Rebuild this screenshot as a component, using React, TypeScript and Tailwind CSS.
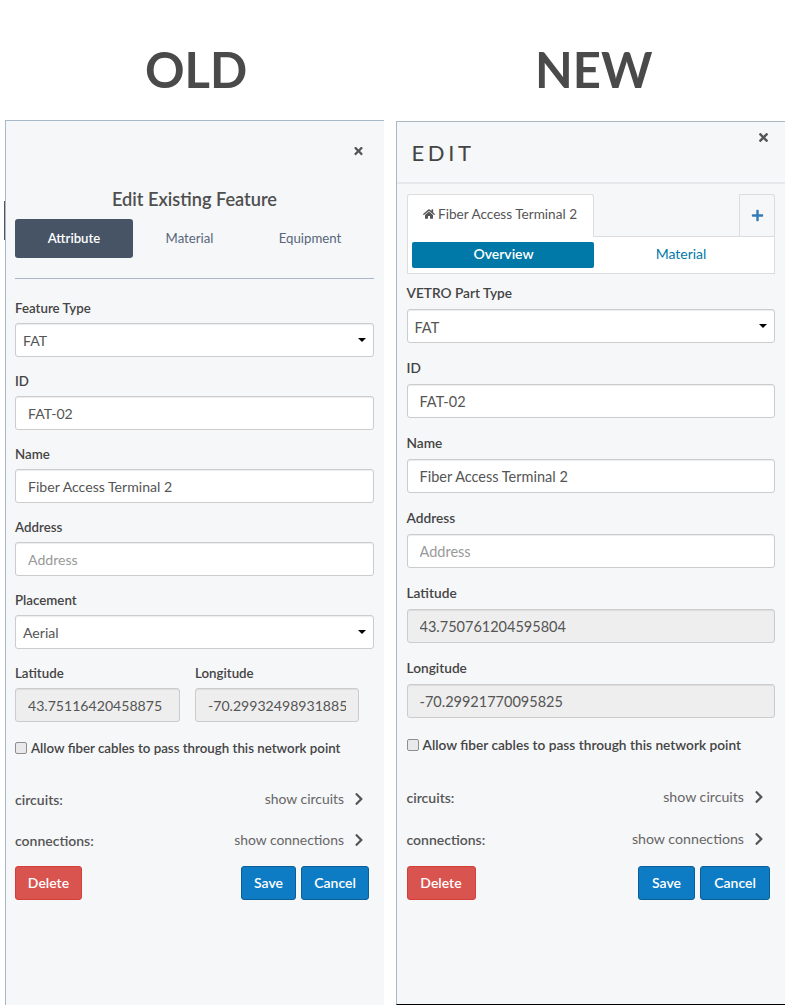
import { FaChevronRight, FaHome, FaPlus, FaTimes } from "react-icons/fa";

const inputBase =
  "block h-[34px] w-full rounded-[3px] border border-[#ccc] px-3 text-[#555] outline-none placeholder:text-[#999] shadow-[inset_0_1px_1px_rgba(0,0,0,0.075)]";

function Label({ children }: { children: React.ReactNode }) {
  return <div className="h-[20px] leading-[20px] font-semibold text-[#444]">{children}</div>;
}

function TextInput({ value, placeholder, disabled, large }: { value?: string; placeholder?: string; disabled?: boolean; large?: boolean }) {
  return (
    <input
      readOnly
      value={value ?? ""}
      placeholder={placeholder}
      className={`${inputBase} ${large ? "text-[14.5px]" : "text-[14.1px]"} ${disabled ? "bg-[#eee]" : "bg-white"}`}
    />
  );
}

function SelectBox({ value, large }: { value: string; large?: boolean }) {
  return (
    <div
      className={`flex h-[34px] w-full items-center justify-between rounded-[3px] border border-[#ccc] bg-white pr-[7px] pl-[7px] text-[#555] shadow-[inset_0_1px_1px_rgba(0,0,0,0.075)] ${large ? "text-[14.5px]" : "text-[14.1px]"}`}
    >
      <span className={large ? "pt-[3px]" : "pt-[2px]"}>{value}</span>
      <span className="h-0 w-0 border-x-[4px] border-t-[4px] border-x-transparent border-t-black" />
    </div>
  );
}

function Field({ label, className, children }: { label: string; className?: string; children: React.ReactNode }) {
  return (
    <div className={className}>
      <Label>{label}</Label>
      {children}
    </div>
  );
}

function CheckRow() {
  return (
    <div className="flex items-center gap-[4px] leading-[20px] font-semibold text-[#444]">
      <span className="h-[12px] w-[12px] rounded-[2px] border border-[#8f8f8f] bg-[#e9e9e9]" />
      <span className="whitespace-nowrap">Allow fiber cables to pass through this network point</span>
    </div>
  );
}

function ShowRow({ label, action, className, actionSize }: { label: string; action: string; className?: string; actionSize: string }) {
  return (
    <div className={`flex h-[20px] items-center justify-between text-[14px] text-[#555] ${className ?? ""}`}>
      <span className="font-semibold">{label}</span>
      <span className={`flex items-center gap-[9px] text-[#666] ${actionSize}`}>
        {action}
        <FaChevronRight className="h-[14px] w-[12px] text-[#555]" />
      </span>
    </div>
  );
}

function Buttons({ className, saveW, cancelW, deleteW }: { className?: string; saveW: string; cancelW: string; deleteW: string }) {
  const blue = "flex h-[34px] items-center justify-center rounded-[3px] border border-[#0b5e96] bg-[#0e7cc4] pb-[2px] text-[14px] font-semibold text-white";
  return (
    <div className={`flex items-start justify-between ${className ?? ""}`}>
      <div className={`flex h-[34px] items-center justify-center rounded-[3px] border border-[#d43f3a] bg-[#d9534f] pb-[2px] text-[14px] font-semibold text-white ${deleteW}`}>
        Delete
      </div>
      <div className="flex gap-[5px]">
        <div className={`${blue} ${saveW}`}>Save</div>
        <div className={`${blue} ${cancelW}`}>Cancel</div>
      </div>
    </div>
  );
}

function OldPanel() {
  return (
    <div className="relative h-[885px] w-[379px] border-t border-l border-[#a9b8c9] bg-[#f6f7f9] pr-[10px] pl-[9px] text-[13.3px]">
      <span className="absolute top-[80px] -left-[2px] h-[39px] w-px bg-[#555]" />
      <FaTimes className="absolute top-[24px] right-[20px] h-[12px] w-[11px] text-[#555]" />
      <div className="pt-[66px] text-center text-[18.2px] leading-[24px] font-semibold text-[#4f4f4f]">Edit Existing Feature</div>
      <div className="mt-[8px] flex h-[39px] text-[13.2px] text-[#56667a]">
        <div className="flex w-[118px] items-center justify-center rounded-[3px] bg-[#465466] font-semibold text-white">Attribute</div>
        <div className="flex w-[113px] items-center justify-center">Material</div>
        <div className="flex w-[128px] items-center justify-center">Equipment</div>
      </div>
      <div className="mt-[20px] h-px bg-[#a9b8c9]" />
      <Field label="Feature Type" className="mt-[19px]"><div className="mt-[5px]"><SelectBox value="FAT" /></div></Field>
      <Field label="ID" className="mt-[14px]"><div className="mt-[5px]"><TextInput value="FAT-02" /></div></Field>
      <Field label="Name" className="mt-[14px]"><div className="mt-[5px]"><TextInput value="Fiber Access Terminal 2" /></div></Field>
      <Field label="Address" className="mt-[14px]"><div className="mt-[5px]"><TextInput placeholder="Address" /></div></Field>
      <Field label="Placement" className="mt-[14px]"><div className="mt-[5px]"><SelectBox value="Aerial" /></div></Field>
      <div className="mt-[14px] flex gap-[15px]">
        <Field label="Latitude" className="w-[165px]"><div className="mt-[5px]"><TextInput disabled value="43.75116420458875" /></div></Field>
        <Field label="Longitude" className="w-[164px]"><div className="mt-[5px]"><TextInput disabled value="-70.29932498931885" /></div></Field>
      </div>
      <div className="mt-[16px]"><CheckRow /></div>
      <ShowRow label="circuits:" action="show circuits" actionSize="text-[13.9px]" className="mt-[31px] mr-[9px]" />
      <ShowRow label="connections:" action="show connections" actionSize="text-[13.9px]" className="mt-[21px] mr-[9px]" />
      <Buttons className="mt-[16px] mr-[5px]" deleteW="w-[67px]" saveW="w-[55px]" cancelW="w-[68px]" />
    </div>
  );
}

function NewPanel() {
  return (
    <div className="relative h-[884px] w-[389px] border-t border-b border-l border-t-[#a9b8c9] border-b-black border-l-[#a9b8c9] bg-[#f6f7f9] text-[13.7px]">
      <FaTimes className="absolute top-[9px] right-[16px] h-[13px] w-[11px] text-[#555]" />
      <div className="h-[62px] border-b-2 border-[#e6e8eb] pt-[17px] pl-[14.5px] text-[22px] leading-[28px] tracking-[3.6px] text-[#444]">EDIT</div>
      <div className="pr-[10px] pl-[9.5px]">
        <div className="relative mt-[10px] flex h-[43px] items-stretch justify-between">
          <div className="z-10 flex h-[43px] w-[187px] items-center justify-center gap-[3px] rounded-t-[3px] border border-b-0 border-[#ddd] bg-white pb-[4px] text-[13.6px] text-[#555]">
            <FaHome className="h-[12px] w-[12px] text-[#555]" />
            Fiber Access Terminal 2
          </div>
          <div className="flex h-[43px] w-[36px] items-center justify-center rounded-tr-[3px] border border-b-0 border-[#ddd] bg-[#f6f7f9] pb-[2px]">
            <FaPlus className="h-[13px] w-[13px] text-[#337ab7]" />
          </div>
          <div className="absolute right-0 bottom-0 left-0 h-px bg-[#ddd]" />
        </div>
        <div className="flex h-[37px] border border-t-0 border-[#ddd] bg-white pt-[5px] pl-[4px]">
          <div className="flex h-[26px] w-[182px] items-center justify-center rounded-[2px] bg-[#0079a8] pb-[3px] pl-[2px] text-[14px] font-semibold text-white">Overview</div>
          <div className="flex h-[26px] w-[175px] items-center justify-center pb-[3px] text-[14px] text-[#0079a8]">Material</div>
        </div>
        <Field label="VETRO Part Type" className="mt-[9px]"><div className="mt-[6px]"><SelectBox large value="FAT" /></div></Field>
        <Field label="ID" className="mt-[15px]"><div className="mt-[6px]"><TextInput large value="FAT-02" /></div></Field>
        <Field label="Name" className="mt-[15px]"><div className="mt-[6px]"><TextInput large value="Fiber Access Terminal 2" /></div></Field>
        <Field label="Address" className="mt-[15px]"><div className="mt-[6px]"><TextInput large placeholder="Address" /></div></Field>
        <Field label="Latitude" className="mt-[15px]"><div className="mt-[6px]"><TextInput large disabled value="43.750761204595804" /></div></Field>
        <Field label="Longitude" className="mt-[15px]"><div className="mt-[6px]"><TextInput large disabled value="-70.29921770095825" /></div></Field>
        <div className="mt-[17px]"><CheckRow /></div>
        <ShowRow label="circuits:" action="show circuits" actionSize="text-[14.2px]" className="mt-[32px] mr-[10px]" />
        <ShowRow label="connections:" action="show connections" actionSize="text-[14.2px]" className="mt-[22px] mr-[10px]" />
        <Buttons className="mt-[17px] mr-[5px]" deleteW="w-[69px]" saveW="w-[57px]" cancelW="w-[70px]" />
      </div>
    </div>
  );
}

export default function App() {
  return (
    <div className="flex h-[1008px] w-[792px] overflow-hidden bg-white font-['Lato',sans-serif]">
      <div className="ml-[5px] w-[391px]">
        <div className="h-[120px] w-[379px] pt-[40px] pl-[140px] text-[49px] leading-[58px] font-bold text-[#4a4a4a]">OLD</div>
        <OldPanel />
      </div>
      <div className="w-[396px]">
        <div className="h-[121px] pt-[40px] pl-[139px] text-[49px] leading-[58px] font-bold text-[#4a4a4a]">NEW</div>
        <NewPanel />
      </div>
    </div>
  );
}
